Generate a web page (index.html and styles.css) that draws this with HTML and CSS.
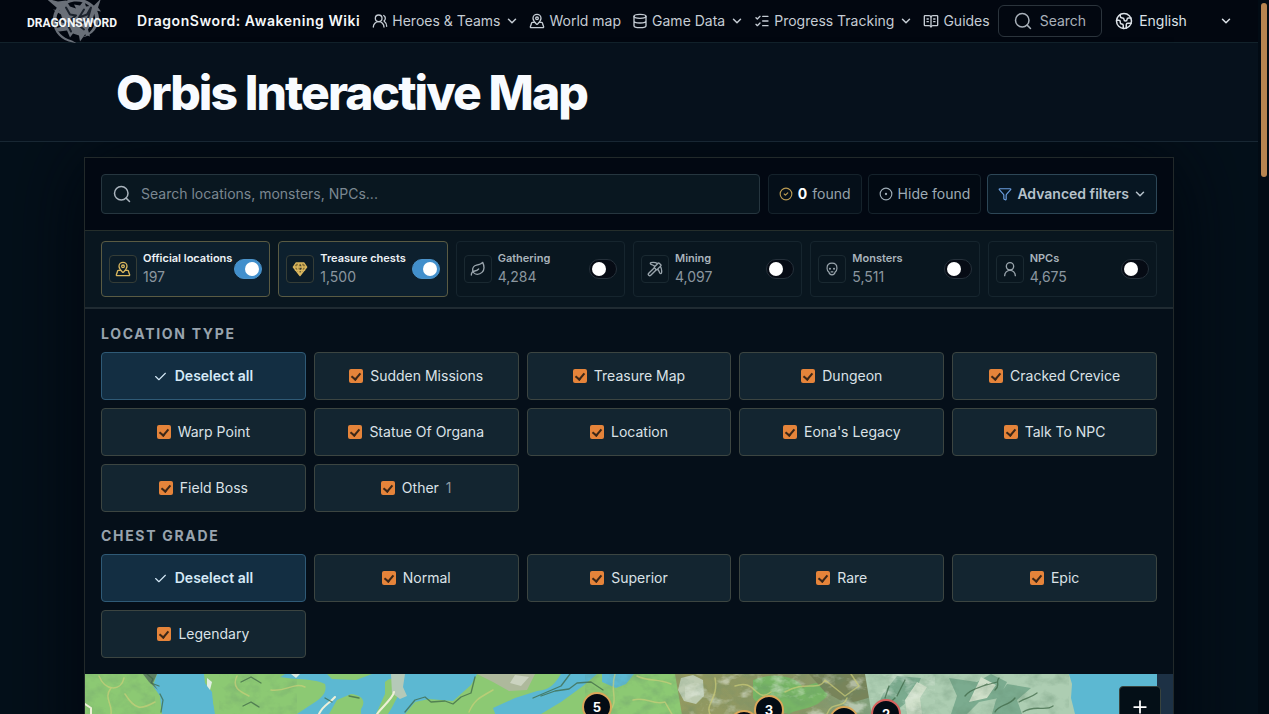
FILE: index.html
```
<!DOCTYPE html>
<html lang="en">
<head>
<meta charset="utf-8">
<meta name="viewport" content="width=device-width, initial-scale=1">
<title>Orbis Interactive Map</title>
<link rel="stylesheet" href="styles.css">
</head>
<body>
<svg class="sprite" aria-hidden="true">
  <symbol id="chevron" viewBox="0 0 24 24"><path d="m5 8.500 7 7 7-7"/></symbol>
  <symbol id="users" viewBox="0 0 24 24"><path d="M18 21a8 8 0 0 0-16 0"/><circle cx="10" cy="8" r="5"/><path d="M22 20c0-3.370-2-6.500-4-8a5 5 0 0 0-.45-8.300"/></symbol>
  <symbol id="pin" viewBox="0 0 24 24"><path d="M18 8c0 3.613-3.869 7.429-5.393 8.795a1 1 0 0 1-1.214 0C9.870 15.429 6 11.613 6 8a6 6 0 0 1 12 0"/><circle cx="12" cy="8" r="2"/><path d="M8.714 14h-3.710a1 1 0 0 0-.948.683l-2.004 6A1 1 0 0 0 3 22h18a1 1 0 0 0 .948-1.316l-2-6a1 1 0 0 0-.949-.684h-3.712"/></symbol>
  <symbol id="database" viewBox="0 0 24 24"><ellipse cx="12" cy="5" rx="9" ry="3"/><path d="M3 5v14a9 3 0 0 0 18 0V5M3 12a9 3 0 0 0 18 0"/></symbol>
  <symbol id="checks" viewBox="0 0 24 24"><path d="M13 5h8M13 12h8M13 19h8M3 17l2 2 4-4M3 7l2 2 4-4"/></symbol>
  <symbol id="book" viewBox="0 0 24 24"><path d="M12 5v15M16 13h2M16 9h2M6 13h2M6 9h2"/><path d="M3 19a1 1 0 0 1-1-1V5a1 1 0 0 1 1-1h6a3 3 0 0 1 3 2 3 3 0 0 1 3-2h6a1 1 0 0 1 1 1v13a1 1 0 0 1-1 1h-6a3 3 0 0 0-3 2 3 3 0 0 0-3-2z"/></symbol>
  <symbol id="search" viewBox="0 0 24 24"><circle cx="11" cy="11" r="9"/><path d="m22 22-4.500-4.500"/></symbol>
  <symbol id="earth" viewBox="0 0 24 24"><path d="M21.540 15H17a2 2 0 0 0-2 2v4.540M7 3.340V5a3 3 0 0 0 3 3 2 2 0 0 1 2 2c0 1.100.9 2 2 2a2 2 0 0 0 2-2c0-1.100.9-2 2-2h3.170M11 21.950V18a2 2 0 0 0-2-2 2 2 0 0 1-2-2v-1a2 2 0 0 0-2-2H2.050"/><circle cx="12" cy="12" r="10"/></symbol>
  <symbol id="found" viewBox="0 0 24 24"><circle cx="12" cy="12" r="10"/><path d="m9 12 2 2 4-4"/></symbol>
  <symbol id="dot" viewBox="0 0 24 24"><circle cx="12" cy="12" r="10"/><circle cx="12" cy="12" r="1"/></symbol>
  <symbol id="funnel" viewBox="0 0 24 24"><path d="M10 20a1 1 0 0 0 .553.895l2 1A1 1 0 0 0 14 21v-7a2 2 0 0 1 .517-1.341L21.740 4.670A1 1 0 0 0 21 3H3a1 1 0 0 0-.742 1.670l7.225 7.989A2 2 0 0 1 10 14z"/></symbol>
  <symbol id="gem" viewBox="0 0 24 24"><path d="M6 3h12l4 6-10 13L2 9zM2 9h20M12 22 8 9l3-6M12 22l4-13-3-6M5 14h14"/></symbol>
  <symbol id="leaf" viewBox="0 0 24 24"><path d="M11 20A7 7 0 0 1 9.800 6.100C15.500 5 17 4.480 19 2c1 2 2 4.180 2 8 0 5.500-4.780 10-10 10Z"/><path d="M2 21c0-3 1.850-5.360 5.080-6C9.500 14.520 12 13 13 12"/></symbol>
  <symbol id="pickaxe" viewBox="0 0 24 24"><path d="m14 13-8.381 8.380a1 1 0 0 1-3.001-3l8.384-8.381M15.973 4.027A13 13 0 0 0 5.902 2.373c-1.398.342-1.092 2.158.277 2.601a19.900 19.900 0 0 1 5.822 3.024M16.001 11.999a19.900 19.900 0 0 1 3.024 5.824c.444 1.369 2.260 1.676 2.603.278A13 13 0 0 0 20 8.069M18.352 3.352a1.205 1.205 0 0 0-1.704 0l-5.296 5.296a1.205 1.205 0 0 0 0 1.704l2.296 2.296a1.205 1.205 0 0 0 1.704 0l5.296-5.296a1.205 1.205 0 0 0 0-1.704z"/></symbol>
  <symbol id="skull" viewBox="0 0 24 24"><path d="M12 2c-5 0-8.500 3.500-8.500 8.500 0 3 1 5 3 6.500.5 3 2.500 5 5.500 5s5-2 5.500-5c2-1.500 3-3.500 3-6.500 0-5-3.500-8.500-8.500-8.500z"/><circle cx="8.500" cy="11.500" r=".8"/><circle cx="15.500" cy="11.500" r=".8"/><path d="M10.500 17h3"/></symbol>
  <symbol id="user" viewBox="0 0 24 24"><circle cx="12" cy="8" r="5.500"/><path d="M20 22a8 8 0 0 0-16 0"/></symbol>
  <symbol id="check" viewBox="0 0 24 24"><path d="m3 12 6 6L21 6"/></symbol>
  <symbol id="plus" viewBox="0 0 24 24"><path d="M12 2v20M2 12h20"/></symbol>
</svg>

<div class="page">
  <header class="topbar">
    <a class="logo" href="#" aria-label="DragonSword home">
      <svg class="dragon" viewBox="0 0 60 46" aria-hidden="true">
        <path d="M24 1C12 4 6 13 7 24c1 10 8 18 20 20l4 1-5-3C16 39 10 33 10 24 10 13 17 5 28 3c12-1 20 6 21 16 1 8-4 16-13 20 11-2 17-11 17-20C52 6 38-3 24 1z"/>
        <path d="M0 0l12 3 8-1 4 6 6 2-2-4 6 1 4-5 2 6 8-1 7-7-3 9 3 4-6-1-2 8 4 5-5-1-4 7 2 7-5-2-5 7-1-6-6-2-3 4-3-7-8 1-4-3 7-2-5-6 6 1-2-7-8-5 7 1z"/>
        <path class="cut" d="M20 9l4 7 6 1-5 4 4 4M38 11l-5 8 8-3 4-7-3 11-6 5M14 22l7 3 4 8M33 27l5 4"/>
      </svg>
      <span class="wordmark">DRAGONSWORD</span>
    </a>
    <a class="brand" href="#">DragonSword: Awakening Wiki</a>
    <nav class="nav" aria-label="Main">
      <button class="nav-item" type="button"><svg class="icon"><use href="#users"/></svg>Heroes &amp; Teams<svg class="chev"><use href="#chevron"/></svg></button>
      <a class="nav-item" href="#"><svg class="icon"><use href="#pin"/></svg>World map</a>
      <button class="nav-item" type="button"><svg class="icon"><use href="#database"/></svg>Game Data<svg class="chev"><use href="#chevron"/></svg></button>
      <button class="nav-item" type="button"><svg class="icon"><use href="#checks"/></svg>Progress Tracking<svg class="chev"><use href="#chevron"/></svg></button>
      <a class="nav-item" href="#"><svg class="icon"><use href="#book"/></svg>Guides</a>
    </nav>
    <button class="site-search" type="button"><svg class="icon-lg"><use href="#search"/></svg>Search</button>
    <label class="language"><svg class="icon-lg"><use href="#earth"/></svg>
      <select aria-label="Language"><option>English</option></select>
      <svg class="chev"><use href="#chevron"/></svg>
    </label>
  </header>

  <section class="hero"><h1>Orbis Interactive Map</h1></section>

  <main class="panel">
    <div class="toolbar">
      <label class="search-field"><svg class="icon-lg"><use href="#search"/></svg><input type="search" aria-label="Search the map" placeholder="Search locations, monsters, NPCs..."></label>
      <div class="tool found"><svg class="icon-sm gold"><use href="#found"/></svg><strong>0</strong><span>found</span></div>
      <button class="tool hide" type="button"><svg class="icon-sm"><use href="#dot"/></svg>Hide found</button>
      <button class="tool advanced" type="button"><svg class="icon-sm blue"><use href="#funnel"/></svg>Advanced filters<svg class="chev"><use href="#chevron"/></svg></button>
    </div>

    <div class="layers">
      <label class="layer on"><span class="tile"><svg class="icon"><use href="#pin"/></svg></span><span class="info"><b>Official locations</b><span>197</span></span><input class="switch" type="checkbox" role="switch" checked></label>
      <label class="layer on"><span class="tile gem"><svg class="icon"><use href="#gem"/></svg></span><span class="info"><b>Treasure chests</b><span>1,500</span></span><input class="switch" type="checkbox" role="switch" checked></label>
      <label class="layer"><span class="tile"><svg class="icon"><use href="#leaf"/></svg></span><span class="info"><b>Gathering</b><span>4,284</span></span><input class="switch" type="checkbox" role="switch"></label>
      <label class="layer"><span class="tile"><svg class="icon"><use href="#pickaxe"/></svg></span><span class="info"><b>Mining</b><span>4,097</span></span><input class="switch" type="checkbox" role="switch"></label>
      <label class="layer"><span class="tile"><svg class="icon-sm"><use href="#skull"/></svg></span><span class="info"><b>Monsters</b><span>5,511</span></span><input class="switch" type="checkbox" role="switch"></label>
      <label class="layer"><span class="tile"><svg class="icon"><use href="#user"/></svg></span><span class="info"><b>NPCs</b><span>4,675</span></span><input class="switch" type="checkbox" role="switch"></label>
    </div>

    <div class="filters">
      <section class="group">
        <h2>Location type</h2>
        <div class="options">
          <button class="option all" type="button"><svg class="tick"><use href="#check"/></svg>Deselect all</button>
          <label class="option"><input type="checkbox" checked>Sudden Missions</label>
          <label class="option"><input type="checkbox" checked>Treasure Map</label>
          <label class="option"><input type="checkbox" checked>Dungeon</label>
          <label class="option"><input type="checkbox" checked>Cracked Crevice</label>
          <label class="option"><input type="checkbox" checked>Warp Point</label>
          <label class="option"><input type="checkbox" checked>Statue Of Organa</label>
          <label class="option"><input type="checkbox" checked>Location</label>
          <label class="option"><input type="checkbox" checked>Eona's Legacy</label>
          <label class="option"><input type="checkbox" checked>Talk To NPC</label>
          <label class="option"><input type="checkbox" checked>Field Boss</label>
          <label class="option"><input type="checkbox" checked>Other <small>1</small></label>
        </div>
      </section>
      <section class="group">
        <h2>Chest grade</h2>
        <div class="options">
          <button class="option all" type="button"><svg class="tick"><use href="#check"/></svg>Deselect all</button>
          <label class="option"><input type="checkbox" checked>Normal</label>
          <label class="option"><input type="checkbox" checked>Superior</label>
          <label class="option"><input type="checkbox" checked>Rare</label>
          <label class="option"><input type="checkbox" checked>Epic</label>
          <label class="option"><input type="checkbox" checked>Legendary</label>
        </div>
      </section>
    </div>

    <div class="map">
      <svg class="terrain" viewBox="0 0 1088 120" aria-hidden="true">
        <defs>
          <filter id="rough" x="0" y="0" width="100%" height="100%"><feTurbulence type="fractalNoise" baseFrequency="0.07 0.09" numOctaves="4" seed="7"/><feColorMatrix values="0 0 0 0 .12  0 0 0 0 .25  0 0 0 0 .15  1.800 0 0 0 -.75"/></filter>
          <filter id="snow" x="0" y="0" width="100%" height="100%"><feTurbulence type="fractalNoise" baseFrequency="0.05 0.08" numOctaves="4" seed="21"/><feColorMatrix values="0 0 0 0 .82  0 0 0 0 .88  0 0 0 0 .80  0 4 0 0 -2.100"/></filter>
          <linearGradient id="highland"><stop offset="0" stop-color="#949a60"/><stop offset=".55" stop-color="#8b9666"/><stop offset="1" stop-color="#7fa98c"/></linearGradient>
        </defs>
        <rect width="1072" height="120" fill="#5cb8d2"/>
        <g fill="#8cc973">
          <path d="M0 0h72l-4 12 7 10 2 18v80H0z"/>
          <path d="M95 0h89c18 7 42 3 56 10 3 10-6 16-16 22l-12 8v80h-80l-2-80-3-16z"/>
          <path d="M154 0h46l-14 9-32-2zM244 40l8-14 14-6c10 1 16 6 10 15l-2 85h-30zM300 8c6-6 18-4 17 5-4 8-6 14-14 27h-12l9-20zM242 0h45l-16 6-24-1z"/>
          <path d="M320 40l10-12 14-3 24 2 18-16 6-11h84c-6 9-10 16-24 17l-22 7-22 10 4 11 20 3 24-8 20-12 22-16 14-12h5v8l14 6 10-4 8-10h60v120H320z"/>
        </g>
        <path d="M95 0h24l1 9 7 9 2 22-6 10H80z" fill="#5cb8d2"/>
        <path d="M392 0h58l-8 16-18 1-16-9z" fill="#aeb99c"/><path d="M430 1l14 2-8 9-11-3z" fill="#cbd3c0"/>
        <path d="M306 0h14l-2 13 4 9-7 3-8-6z" fill="#b5c9b8"/>
        <path d="M122 4l5 4-2 8-3-4zM206 0h9l-4 4z" fill="#e0eee3"/>
        <path d="M477 0h30l-11 7-9-1z" fill="#5cb8d2"/>
        <path d="M58 0h14l-4 9 5 7-9-8z" fill="#5d7f62"/>
        <path d="M590 0h236v120H600l2-50z" fill="url(#highland)"/>
        <path d="M596 4l12-3 10 5 1 16-8 8-12-3-6-11z" fill="#bdcbb1"/>
        <path d="M668 6c22-9 46-3 50 8 16-10 28-4 24 8-12 14-28 12-38 18-18-4-30-8-36-16z" fill="#77b565"/>
        <path d="M724 0h70l-4 22-28 8-22-12z" fill="#78845a"/>
        <path d="M780 0h204l3 10-1 14 4 16v80H800z" fill="#adcdb2"/>
        <path d="M812 2l24 2-9 20-20 16h-18l9-20zM864 4l28 4 14-8 16 8-8 16-20 4-12 12h-16l6-18zM922 10l24 4-14 12 5 14h-30l4-14z" fill="#7bab8f"/>
        <path d="M832 8l10 5-7 11 2 16h-15l-2-14zM896 3l15 8-9 13-18 4z" fill="#cfdfc9"/>
        <rect x="0" y="0" width="70" height="120" filter="url(#rough)" opacity=".3"/>
        <rect x="134" y="0" width="78" height="120" filter="url(#rough)" opacity=".3"/>
        <rect x="500" y="0" width="484" height="120" filter="url(#rough)" opacity=".4"/>
        <rect x="600" y="0" width="250" height="120" filter="url(#snow)" opacity=".5"/>
        <g fill="none" stroke="#d0cf79" stroke-width="1.500" opacity=".65">
          <path d="M14 2c6 15 22 16 25 2M26 14c-8 10 2 16 0 26M40 20c10 16 16 16 30 8M152 2c-6 12 4 16 12 20M186 16c16 2 22-8 34-3M384 38c6-14 14-16 24-22"/>
          <path d="M530 0c-6 20 6 26-8 40M548 26c14-4 20 6 32 2l8 14M552 2c12 6 20 2 34 8M630 4c4 20-10 26-5 36M650 12c22-8 20 18 36 6M700 18c20-12 34 0 40-12l20 16 14-10-8-12M742 40c5-14 16-4 20-16"/>
        </g>
        <g fill="none" stroke="#eef0d8" stroke-width="2"><path d="M234 40c4-9 10-10 16-17M292 40c6-8 16-16 17-22M0 30l6 4v6"/></g>
        <g fill="none" stroke="#3f6847" stroke-width="1.300" opacity=".75">
          <path d="M62 0l6 5-2 4 8 3M75 20l3 6-2 12M156 8l10-5 10 6M158 32l8-4 8 5M240 24l7 4M264 22l10 2M320 38l10-12 10-3 6 5 14-1 8 3 8-7 10-4 4-16M456 22l14-5 14-2 8-6 14-1 12 8M448 24l28-12 9-12"/>
          <path d="M794 30c6-4 10 1 16-6M800 24l4-12M812 22l8-16M880 22c6-8 16-8 22-12M898 12l14-4M910 38c4-8 14-6 20-14M934 28c8-5 10-3 18-9M938 38c12-8 22 0 30-6M914 4c-4 4 2 7-4 12"/>
        </g>
      </svg>
      <button class="marker m1" type="button">5</button>
      <button class="marker m2" type="button" aria-label="Location cluster"></button>
      <button class="marker m3" type="button">3</button>
      <button class="marker m4" type="button" aria-label="Location cluster"></button>
      <button class="marker m5 red" type="button">2</button>
      <button class="zoom-in" type="button" aria-label="Zoom in"><svg><use href="#plus"/></svg></button>
    </div>
  </main>
</div>
<div class="scrollbar" aria-hidden="true"><div class="thumb"></div></div>
</body>
</html>
```

FILE: styles.css
```
* { box-sizing: border-box; }
body {
  margin: 0;
  display: flex;
  height: 100vh;
  overflow: hidden;
  background: #04101a;
  color: #d5dce3;
  font: 14px/20px Inter, "Liberation Sans", sans-serif;
}
button, input, select { font: inherit; color: inherit; }
button { margin: 0; padding: 0; border: 0; background: none; cursor: pointer; }
a { color: inherit; text-decoration: none; }
svg { fill: none; stroke: currentColor; stroke-width: 2; stroke-linecap: round; stroke-linejoin: round; flex: none; }
.sprite { position: absolute; width: 0; height: 0; }
.icon { width: 16px; height: 16px; }
.icon-sm { width: 14px; height: 14px; }
.icon-lg { width: 18px; height: 18px; }
.chev { width: 12px; height: 12px; stroke-width: 3; }

.page { flex: 1; min-width: 0; display: flex; flex-direction: column; }
.scrollbar { flex: none; width: 11px; padding: 3px; background: #020b14; }
.thumb { width: 6px; height: 174px; border-radius: 3px; background: #b78550; }

.topbar {
  flex: none;
  display: flex;
  align-items: center;
  height: 43px;
  padding: 0 26px 0 28px;
  background: #020710;
  border-bottom: 1px solid #12222b;
}
.logo { position: relative; display: flex; align-items: center; justify-content: center; width: 88px; height: 42px; margin-right: 21px; color: #f4f6f8; }
.dragon { position: absolute; left: 18px; top: -2px; width: 60px; height: 47px; fill: #696f78; stroke: none; }
.dragon .cut { fill: none; stroke: #1b222c; stroke-width: 2; }
.wordmark { position: relative; padding-top: 4px; font: bold 12px/20px Roboto, sans-serif; }
.brand { margin-right: 12px; color: #f5f8fa; font-weight: 600; letter-spacing: 0.04em; white-space: nowrap; }
.nav { display: flex; gap: 11px; margin-right: 8px; }
.nav-item { display: flex; align-items: center; gap: 4px; color: #c5ccd4; white-space: nowrap; }
.nav-item .chev { margin-left: 2px; }
.site-search { display: flex; align-items: center; gap: 8px; height: 32px; padding: 0 15px; border: 1px solid #2b343c; border-radius: 6px; color: #a9b1ba; }
.language { flex: 1; display: flex; align-items: center; gap: 6px; margin-left: 13px; color: #dce2e8; }
.language select { flex: 1; min-width: 0; padding: 0; border: 0; background: transparent; appearance: none; }

.hero { position: relative; z-index: 1; flex: none; padding: 22px 116px 20px; background: #06111c; border-bottom: 1px solid #182733; }
h1 { margin: 0; color: #f8fbff; font-size: 48px; line-height: 56px; font-weight: 800; letter-spacing: -0.04em; }

.panel { flex: none; margin: 15px 84px 0; border: 1px solid #22292a; box-shadow: 0 0 80px #01060e; }
.toolbar { display: flex; gap: 6px; padding: 16px; background: #020812; border-bottom: 1px solid #252e2b; }
.search-field { flex: 1; display: flex; align-items: center; gap: 10px; height: 40px; margin-right: 2px; padding: 0 11px; background: #091720; border: 1px solid #26363f; border-radius: 4px; color: #aab4bd; }
.search-field input { flex: 1; min-width: 0; padding: 0; border: 0; outline: 0; background: none; }
.search-field input::placeholder { color: #7b8791; opacity: 1; }
.tool { display: flex; align-items: center; height: 40px; gap: 5px; padding: 0 10px; background: #050f19; border: 1px solid #15222b; border-radius: 4px; color: #97a2ab; white-space: nowrap; }
.tool strong { color: #fff; }
.hide { color: #9eacb6; background: #020a13; }
.advanced { font-weight: 600; color: #b6c2cb; background: #071622; border-color: #2d4757; }
.gold { color: #b99a52; }
.blue { color: #6b9ee0; }

.layers { display: grid; grid-template-columns: repeat(6, minmax(0, 1fr)); gap: 8px; padding: 10px 16px; background: #09161f; border-bottom: 2px solid #202b32; }
.layer { display: flex; align-items: center; gap: 6px; height: 56px; padding: 0 7px; border: 1px solid #16252e; border-radius: 4px; color: #aab4bc; white-space: nowrap; }
.layer.on { background: #0d202e; border-color: #5a5b43; color: #eef2f5; }
.tile { display: grid; place-items: center; flex: none; width: 28px; height: 28px; border: 1px solid #1a2931; border-radius: 4px; color: #9aa5ad; }
.on .tile { border-color: #353d37; color: #d9b65e; background: #0c1c27; }
.tile.gem svg { fill: #8a7134; }
.info { flex: 1; min-width: 0; display: flex; flex-direction: column; }
.info b { font-size: 11px; line-height: 16px; font-weight: 600; }
.info span { line-height: 22px; color: #8b969f; }
.switch { appearance: none; display: flex; align-items: center; flex: none; width: 28px; height: 20px; margin: 0; padding: 0 2px; border: 1px solid #25303a; border-radius: 10px; background: #060b14; }
.switch::before { content: ""; width: 14px; height: 14px; border-radius: 50%; background: #fff; }
.switch:checked { justify-content: flex-end; background: #418fcc; border-color: #4b93ca; }

.filters { display: flex; flex-direction: column; gap: 16px; padding: 17px 16px 16px; background: #050f19; }
h2 { margin: 0 0 10px; color: #98a3ad; font-size: 14px; line-height: 16px; font-weight: 700; letter-spacing: 0.12em; text-transform: uppercase; }
.options { display: grid; grid-template-columns: repeat(5, minmax(0, 1fr)); gap: 8px; }
.option { display: flex; align-items: center; justify-content: center; gap: 7px; height: 48px; border: 1px solid #3c4541; border-radius: 4px; background: #132530; color: #dbe2e7; }
.option input { appearance: none; width: 14px; height: 14px; margin: 0; border-radius: 2px; background: #e5843a; display: flex; align-items: flex-start; justify-content: center; padding-top: 2px; }
.option input:checked::before { content: ""; box-sizing: border-box; width: 6px; height: 9px; border: solid #3b2718; border-width: 0 2px 2px 0; transform: rotate(40deg); }
.option small { font-size: 14px; color: #8d99a2; }
.option.all { background: #132e42; border-color: #2f5a76; color: #d5e9f7; font-weight: 600; }
.tick { width: 13px; height: 13px; margin-right: 1px; }

.map { position: relative; height: 120px; background: #1d3145; overflow: hidden; }
.terrain { display: block; width: 100%; height: 120px; stroke: none; }
.marker { position: absolute; width: 30px; height: 30px; border: 2px solid #dba75a; border-radius: 50%; background: #030b14; color: #fff; font-size: 13px; font-weight: 700; }
.m1 { left: 497px; top: 18px; }
.m2 { left: 644px; top: 36px; }
.m3 { left: 669px; top: 21px; }
.m4 { left: 744px; top: 32px; }
.m5 { left: 786px; top: 25px; }
.marker.red { border-color: #d8605d; }
.zoom-in { position: absolute; right: 12px; top: 12px; display: grid; place-items: center; width: 42px; height: 42px; background: #040f17; border: 1px solid #39433d; border-radius: 4px; color: #fff; }
.zoom-in svg { width: 14px; height: 14px; stroke-width: 3; }
```
